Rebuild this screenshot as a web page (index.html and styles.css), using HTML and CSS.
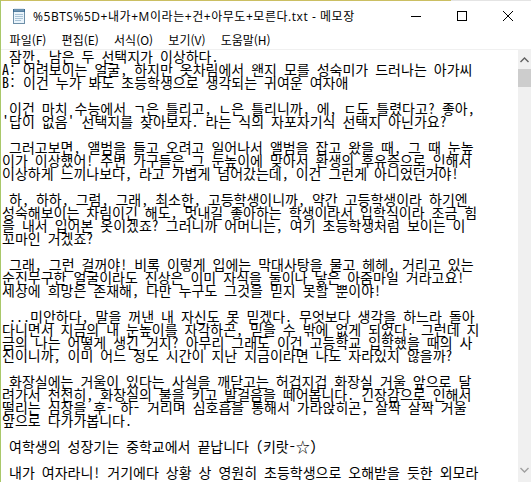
FILE: index.html
```html
<!DOCTYPE html>
<html lang="ko">
<head>
<meta charset="utf-8">
<title>메모장</title>
<link rel="stylesheet" href="styles.css">
</head>
<body>
<div class="window">
  <div class="topline"></div>
  <div class="titlebar">
    <svg class="appicon" width="16" height="16" viewBox="0 0 16 16">
      <rect x="2.5" y="2.5" width="11" height="13" fill="#eaf4fb" stroke="#6d8fa8"/>
      <rect x="2" y="1" width="12" height="3" fill="#3d6d93"/>
      <path d="M4 0.5v3M6 0.5v3M8 0.5v3M10 0.5v3M12 0.5v3" stroke="#9bb7cc" stroke-width="1"/>
      <path d="M4 6.5h8M4 8.5h8M4 10.5h8M4 12.5h6" stroke="#a9c3d6" stroke-width="1"/>
    </svg>
    <div class="title">%5BTS%5D+내가+M이라는+건+아무도+모른다.txt - 메모장</div>
    <div class="controls">
      <div class="btn"><svg width="10" height="10" viewBox="0 0 10 10"><path d="M0 5.5h10" stroke="#000" stroke-width="1"/></svg></div>
      <div class="btn"><svg width="10" height="10" viewBox="0 0 10 10"><rect x="0.5" y="0.5" width="9" height="9" fill="none" stroke="#000" stroke-width="1"/></svg></div>
      <div class="btn"><svg width="10" height="10" viewBox="0 0 10 10"><path d="M0 0L10 10M10 0L0 10" stroke="#000" stroke-width="1"/></svg></div>
    </div>
  </div>
  <div class="menubar">
    <span class="menu">파일(F)</span>
    <span class="menu">편집(E)</span>
    <span class="menu">서식(O)</span>
    <span class="menu">보기(V)</span>
    <span class="menu">도움말(H)</span>
  </div>
  <div class="editor">
    <div class="textarea">
<pre class="doc"> 잠깐, 남은 두 선택지가 이상하다.
A: 어려보이는 얼굴, 하지만 옷차림에서 왠지 모를 성숙미가 드러나는 아가씨
B: 이건 누가 봐도 초등학생으로 생각되는 귀여운 여자애

 이건 마치 수능에서 ㄱ은 틀리고, ㄴ은 틀리니까, 에, ㄷ도 틀렸다고? 좋아,
'답이 없음' 선택지를 찾아보자. 라는 식의 자포자기식 선택지 아닌가요?

 그러고보면, 앨범을 들고 오려고 일어나서 앨범을 잡고 왔을 때, 그 때 눈높
이가 이상했어! 주변 가구들은 그 눈높이에 맞아서 환생의 후유증으로 인해서
이상하게 느끼나보다, 라고 가볍게 넘어갔는데, 이건 그런게 아니었던거야!

 하, 하하, 그럼, 그래, 최소한, 고등학생이니까, 약간 고등학생이라 하기엔
성숙해보이는 차림이긴 해도, 멋내길 좋아하는 학생이라서 입학식이라 조금 힘
을 내서 입어본 옷이겠죠? 그러니까 어머니는, 여기 초등학생처럼 보이는 이
꼬마인 거겠죠?

 그래, 그런 걸꺼야! 비록 이렇게 입에는 막대사탕을 물고 헤헤, 거리고 있는
순진무구한 얼굴이라도 진상은 이미 자식을 둘이나 낳은 아줌마일 거라고요!
세상에 희망은 존재해, 다만 누구도 그것을 믿지 못할 뿐이야!

 ...미안하다, 말을 꺼낸 내 자신도 못 믿겠다. 무엇보다 생각을 하느라 돌아
다니면서 지금의 내 눈높이를 자각하곤, 믿을 수 밖에 없게 되었다. 그런데 지
금의 나는 어떻게 생긴 거지? 아무리 그래도 이건 고등학교 입학했을 때의 사
진이니까, 이미 어느 정도 시간이 지난 지금이라면 나도 자라있지 않을까?

 화장실에는 거울이 있다는 사실을 깨닫고는 허겁지겁 화장실 거울 앞으로 달
려가서 천천히, 화장실의 불을 키고 발걸음을 떼어봅니다. 긴장감으로 인해서
떨리는 심장을 후- 하- 거리며 심호흡을 통해서 가라앉히곤, 살짝 살짝 거울
앞으로 다가가봅니다.

 여학생의 성장기는 중학교에서 끝납니다 (키랏-☆)

 내가 여자라니! 거기에다 상황 상 영원히 초등학생으로 오해받을 듯한 외모라
</pre>
    </div>
    <div class="scrollbar">
      <div class="arrow up"><svg width="9" height="6" viewBox="0 0 9 6"><path d="M0.5 5L4.5 1L8.5 5" fill="none" stroke="#606060" stroke-width="1.4"/></svg></div>
      <div class="thumb"></div>
      <div class="track"></div>
      <div class="arrow"><svg width="9" height="6" viewBox="0 0 9 6"><path d="M0.5 1L4.5 5L8.5 1" fill="none" stroke="#a0a0a0" stroke-width="1.4"/></svg></div>
    </div>
  </div>
</div>
</body>
</html>
```
FILE: styles.css
```css
html, body {
  margin: 0;
  padding: 0;
  background: #ffffff;
}
body {
  width: 531px;
  height: 482px;
  overflow: hidden;
}
.window {
  width: 531px;
  height: 482px;
  display: flex;
  flex-direction: column;
  border-left: 1px solid #a9c86a;
  box-sizing: border-box;
  background: #ffffff;
}
.topline {
  height: 1px;
  background: linear-gradient(to right, #cbbf62 0, #cbbf62 450px, #e4e4e4 450px);
}
.titlebar {
  height: 29px;
  display: flex;
  align-items: center;
  background: #ffffff;
}
.appicon {
  margin-left: 10px;
  margin-right: 6px;
  flex: none;
}
.title {
  flex: 1;
  font-family: "Open Sans", "Noto Sans CJK KR", sans-serif;
  font-size: 12px;
  letter-spacing: 0.55px;
  color: #000000;
  white-space: nowrap;
  overflow: hidden;
}
.controls {
  display: flex;
  height: 29px;
}
.btn {
  width: 46px;
  height: 29px;
  display: flex;
  align-items: center;
  justify-content: center;
}
.menubar {
  height: 19px;
  display: flex;
  align-items: center;
  padding-left: 1px;
  background: #ffffff;
}
.menu {
  font-family: "Noto Sans CJK KR", sans-serif;
  font-size: 12px;
  color: #000000;
  padding: 0 7.6px;
  line-height: 19px;
}
.editor {
  flex: 1;
  display: flex;
  border-top: 1px solid #f0f0f0;
  min-height: 0;
}
.textarea {
  flex: 1;
  overflow: hidden;
  padding-left: 1px;
}
.doc {
  margin: 0;
  font-family: "Noto Sans Mono CJK KR", "Noto Sans CJK KR", monospace;
  font-size: 14px;
  line-height: 13px;
  color: #000000;
  white-space: pre;
}
.scrollbar {
  width: 13px;
  background: #f0f0f0;
  display: flex;
  flex-direction: column;
  padding-bottom: 4px;
}
.arrow {
  height: 17px;
  display: flex;
  align-items: center;
  justify-content: center;
}
.arrow.up {
  height: 19px;
}
.thumb {
  height: 18px;
  background: #cdcdcd;
}
.track {
  flex: 1;
}
```
